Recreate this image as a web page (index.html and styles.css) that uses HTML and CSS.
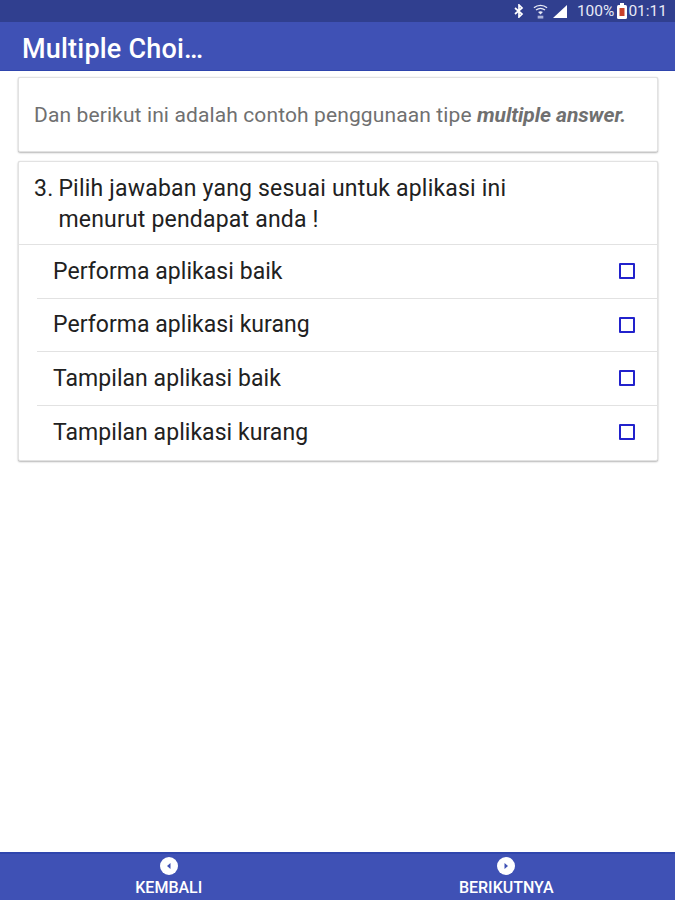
FILE: index.html
```html
<!DOCTYPE html>
<html lang="en">
<head>
    <meta charset="UTF-8">
    <title>Multiple Choice</title>
    <link rel="stylesheet" href="styles.css">
</head>
<body>
    <div class="status-bar">
        <svg class="ic-bt" width="10" height="14" viewBox="0 0 10 14"><path d="M1 4l7 6-3 3V1l3 3-7 6" fill="none" stroke="#fff" stroke-width="1.7"/></svg>
        <svg class="ic-wifi" width="15" height="17" viewBox="0 0 16 17"><g fill="none" stroke="#e8eaf6" stroke-width="1.4"><path d="M1 4.5C5 1 11 1 15 4.5"/><path d="M3.2 7C6 4.8 10 4.8 12.8 7"/></g><path d="M5.4 9C7 7.8 9 7.8 10.6 9L8 11.6z" fill="#e8eaf6"/><rect x="5" y="13" width="6" height="3" fill="#aab2d8"/></svg>
        <svg class="ic-signal" width="16" height="15" viewBox="0 0 16 15"><path d="M1 14L15 1v13z" fill="#fff"/></svg>
        <span class="pct">100%</span>
        <svg class="ic-batt" width="10" height="16" viewBox="0 0 10 16"><rect x="0" y="2" width="10" height="14" rx="1.5" fill="#fff"/><rect x="3" y="0" width="4" height="3" fill="#fff"/><rect x="2.5" y="5" width="5" height="8" fill="#c8412c"/></svg>
        <span class="clock">01:11</span>
    </div>
    <header class="toolbar">
        <h1>Multiple Choi…</h1>
    </header>
    <main class="content">
        <section class="card intro">
            <p>Dan berikut ini adalah contoh penggunaan tipe <b>multiple answer.</b></p>
        </section>
        <section class="card question">
            <div class="q-text">
                <span class="q-num">3.</span>
                <span>Pilih jawaban yang sesuai untuk aplikasi ini<br>menurut pendapat anda !</span>
            </div>
            <ul class="answers">
                <li><span>Performa aplikasi baik</span><i class="box"></i></li>
                <li><span>Performa aplikasi kurang</span><i class="box"></i></li>
                <li><span>Tampilan aplikasi baik</span><i class="box"></i></li>
                <li><span>Tampilan aplikasi kurang</span><i class="box"></i></li>
            </ul>
        </section>
    </main>
    <footer class="bottom-bar">
        <div class="nav-btn">
            <svg width="18" height="18" viewBox="0 0 18 18"><circle cx="9" cy="9" r="9" fill="#fff"/><path d="M10.5 6v6L7 9z" fill="#3f51b5"/></svg>
            <span>KEMBALI</span>
        </div>
        <div class="nav-btn">
            <svg width="18" height="18" viewBox="0 0 18 18"><circle cx="9" cy="9" r="9" fill="#fff"/><path d="M7.5 6v6L11 9z" fill="#3f51b5"/></svg>
            <span>BERIKUTNYA</span>
        </div>
    </footer>
</body>
</html>
```

FILE: styles.css
```css
* {
    box-sizing: border-box;
}
html, body {
    height: 100%;
}
body {
    margin: 0;
    font-family: Roboto, sans-serif;
    background: #fff;
    display: flex;
    flex-direction: column;
    overflow: hidden;
}
.status-bar {
    height: 22px;
    flex: none;
    background: #303f8f;
    color: #e8eaf6;
    display: flex;
    align-items: center;
    justify-content: flex-end;
    padding-right: 8px;
    font-size: 15.5px;
}
.ic-bt {
    margin-right: 9px;
}
.ic-wifi {
    margin-right: 4px;
}
.ic-signal {
    margin-right: 9px;
}
.pct {
    margin-right: 3px;
}
.ic-batt {
    margin: 0 1px 0 0;
}
.toolbar {
    height: 49px;
    flex: none;
    background: #3f51b5;
    border-bottom: 1px solid #2f45ad;
    display: flex;
    align-items: center;
    padding: 6px 0 0 22px;
}
.toolbar h1 {
    margin: 0;
    color: #fff;
    font-size: 27px;
    font-weight: 500;
    letter-spacing: 0.2px;
}
.content {
    flex: 1;
    padding: 6px 17px 0 18px;
}
.card {
    background: #fff;
    border: 1px solid #e2e2e2;
    border-radius: 2px;
    box-shadow: 0 1px 2px rgba(0, 0, 0, 0.28), 0 0 1px rgba(0, 0, 0, 0.16);
}
.intro {
    height: 75px;
    display: flex;
    align-items: center;
    padding-left: 15px;
    margin-bottom: 9px;
}
.intro p {
    margin: 0;
    font-size: 21px;
    letter-spacing: 0.12px;
    color: #707070;
}
.intro b {
    font-style: italic;
    letter-spacing: -0.08px;
}
.question {
    height: 300px;
}
.q-text {
    height: 83px;
    display: flex;
    gap: 5px;
    padding: 12px 0 0 15px;
    font-size: 23px;
    letter-spacing: 0.2px;
    line-height: 30.5px;
    color: #212121;
    border-bottom: 1px solid #e2e2e2;
}
.answers {
    margin: 0;
    padding: 0 0 0 18px;
    list-style: none;
}
.answers li {
    height: 53.5px;
    display: flex;
    align-items: center;
    justify-content: space-between;
    padding: 0 22px 0 16px;
    font-size: 23px;
    letter-spacing: 0.05px;
    color: #212121;
    border-bottom: 1px solid #e2e2e2;
}
.answers li:last-child {
    border-bottom: 0;
}
.box {
    width: 16px;
    height: 16px;
    border: 2px solid #2222cc;
    border-radius: 1px;
}
.bottom-bar {
    height: 48px;
    flex: none;
    background: #3f51b5;
    border-top: 2px solid #2f45ad;
    display: flex;
}
.nav-btn {
    flex: 1;
    display: flex;
    flex-direction: column;
    align-items: center;
    padding-top: 3px;
    color: #fff;
    font-size: 16px;
    font-weight: 500;
}
.nav-btn span {
    margin-top: 5px;
    line-height: 16px;
}
```
